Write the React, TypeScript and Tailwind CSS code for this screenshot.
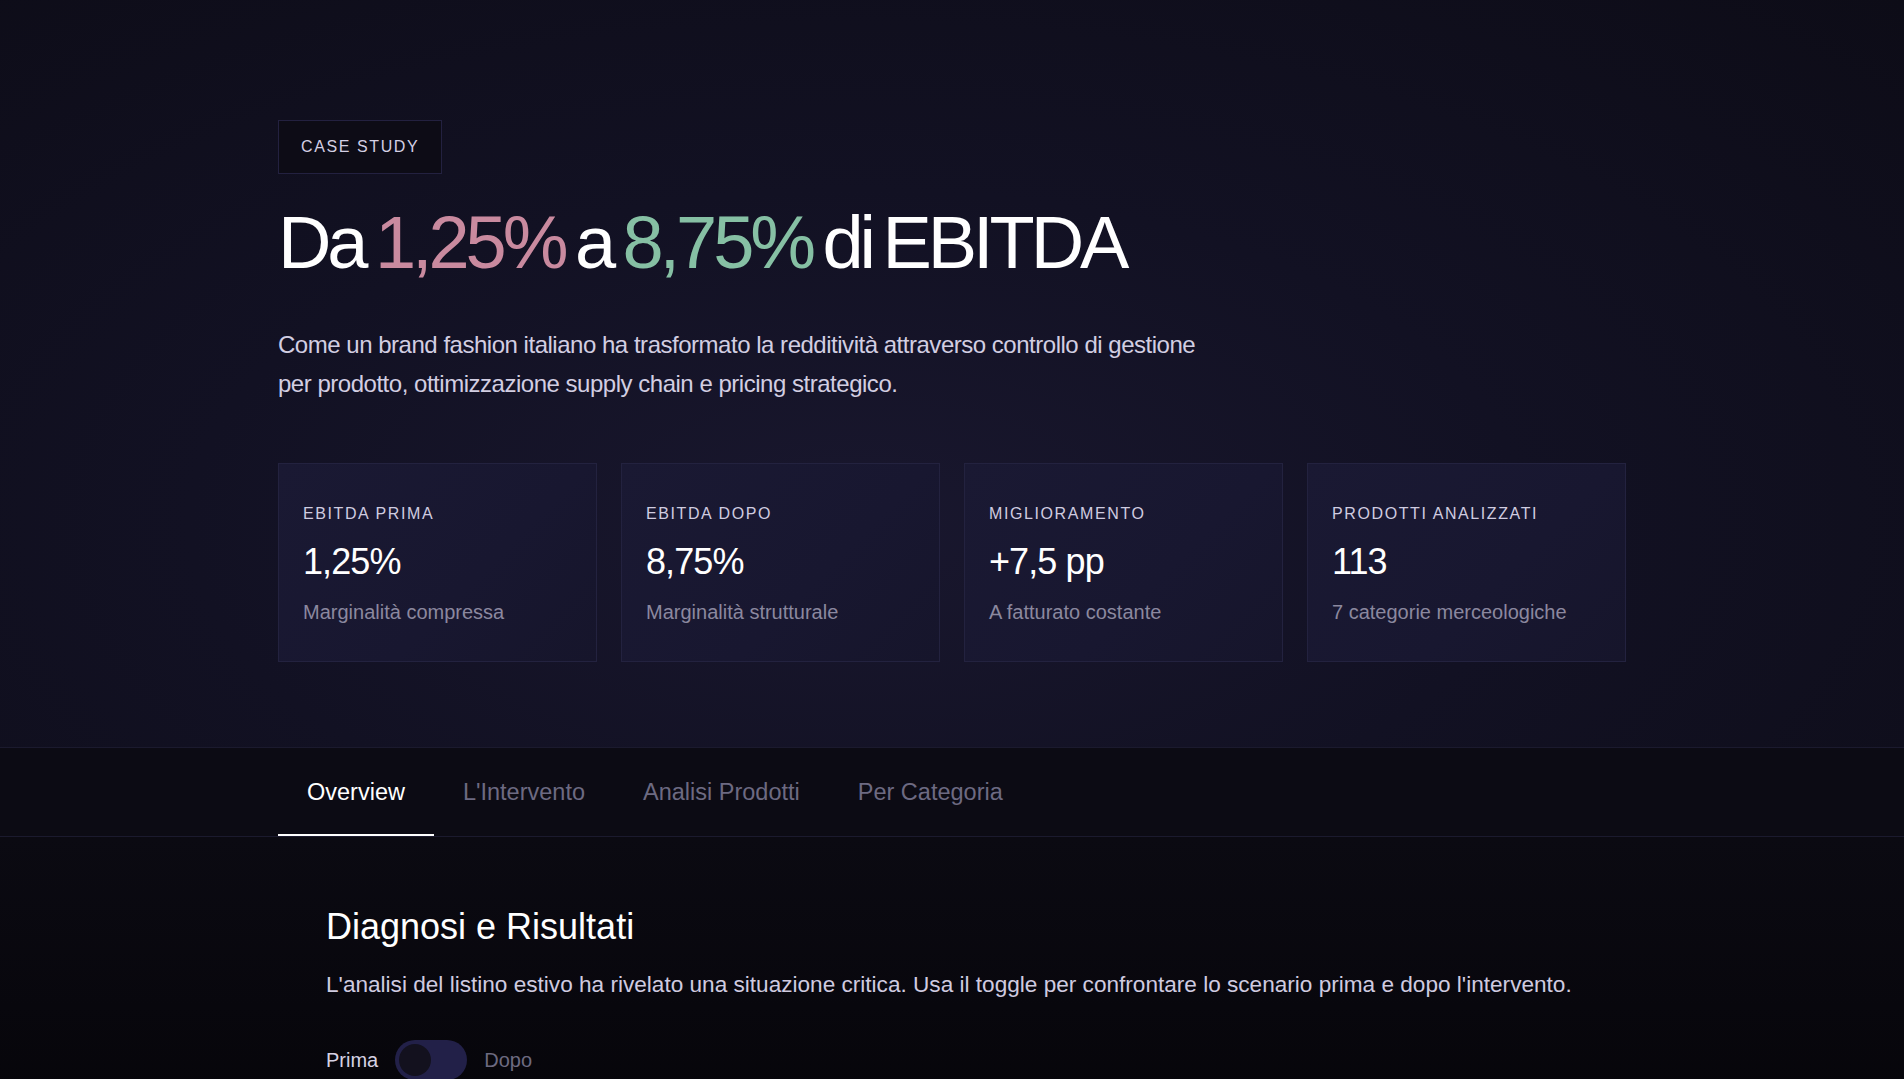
import { useState } from "react";

const stats = [
  { label: "EBITDA PRIMA", value: "1,25%", note: "Marginalità compressa" },
  { label: "EBITDA DOPO", value: "8,75%", note: "Marginalità strutturale" },
  { label: "MIGLIORAMENTO", value: "+7,5 pp", note: "A fatturato costante" },
  { label: "PRODOTTI ANALIZZATI", value: "113", note: "7 categorie merceologiche" },
];

const tabs = ["Overview", "L'Intervento", "Analisi Prodotti", "Per Categoria"];

export default function App() {
  const [active, setActive] = useState(0);
  const [after, setAfter] = useState(false);

  return (
    <div className="min-h-screen bg-[#07060c] text-white font-['Liberation_Sans',Arial,sans-serif]">
      {/* Hero */}
      <section className="bg-[radial-gradient(ellipse_at_45%_70%,#19172e_0%,#121123_45%,#0d0c17_100%)]">
        <div className="max-w-[1348px] mx-auto pt-[120px] pb-[85px]">
          <div className="inline-flex h-[54px] items-center px-[22px] border border-[#232140] bg-[#0d0c16] text-[16px] tracking-[0.1em] text-[#d4d0e4]">
            CASE STUDY
          </div>

          <h1 className="mt-[29px] text-[74px] leading-[1.07] tracking-[-0.055em] [word-spacing:-6px] text-white">
            Da <span className="text-[#c98a9f]">1,25%</span> a{" "}
            <span className="text-[#86c0a4]">8,75%</span> di EBITDA
          </h1>

          <p className="mt-[43px] max-w-[940px] text-[24px] leading-[1.625] tracking-[-0.02em] text-[#d2cee2]">
            Come un brand fashion italiano ha trasformato la redditività attraverso controllo di gestione
            per prodotto, ottimizzazione supply chain e pricing strategico.
          </p>

          <div className="mt-[60px] grid grid-cols-4 gap-6">
            {stats.map((s) => (
              <div
                key={s.label}
                className="flex flex-col border border-[#23223f] bg-[linear-gradient(135deg,#1a1933_0%,#181730_60%,#16152b_100%)] px-6 pt-[38px] pb-[35px]"
              >
                <span className="text-[16px] leading-6 tracking-[0.1em] text-[#d0cce0]">{s.label}</span>
                <span className="mt-4 text-[36px] leading-10 tracking-[-0.025em] text-white">{s.value}</span>
                <span className="mt-4 text-[20px] leading-7 text-[#8b889f]">{s.note}</span>
              </div>
            ))}
          </div>
        </div>
      </section>

      {/* Tabs */}
      <nav className="border-y border-[#1b1a2e] bg-[#0c0b14]">
        <div className="max-w-[1348px] mx-auto flex">
          {tabs.map((t, i) => (
            <button
              key={t}
              onClick={() => setActive(i)}
              className={
                "h-[88px] pt-[3px] px-[29px] border-b-2 text-[23.5px] " +
                (i === active ? "border-white text-white" : "border-transparent text-[#6d6a82]")
              }
            >
              {t}
            </button>
          ))}
        </div>
      </nav>

      {/* Overview */}
      <section className="bg-[linear-gradient(180deg,#0b0a12_0%,#050408_100%)]">
        <div className="max-w-[1348px] mx-auto px-12 pt-[70px] pb-24">
          <h2 className="text-[36px] leading-10 text-white">Diagnosi e Risultati</h2>
          <p className="mt-[21px] text-[22.6px] leading-[1.5] text-[#cfcbe0]">
            L'analisi del listino estivo ha rivelato una situazione critica. Usa il toggle per confrontare lo
            scenario prima e dopo l'intervento.
          </p>

          <div className="mt-[38px] flex items-center gap-[17px] text-[20px]">
            <span className={after ? "text-[#6d6a80]" : "text-[#d6d2e4]"}>Prima</span>
            <button
              onClick={() => setAfter(!after)}
              className={
                "flex h-10 w-[72px] items-center rounded-full bg-[#222048] p-1 " +
                (after ? "justify-end" : "justify-start")
              }
            >
              <span className="h-8 w-8 rounded-full bg-[#13111e]" />
            </button>
            <span className={after ? "text-[#d6d2e4]" : "text-[#6d6a80]"}>Dopo</span>
          </div>
        </div>
      </section>
    </div>
  );
}
